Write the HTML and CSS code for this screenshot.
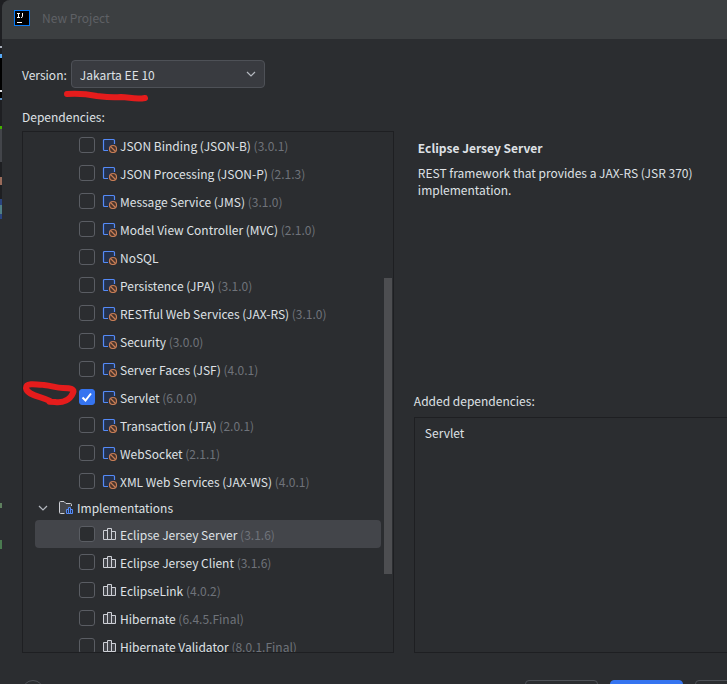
FILE: index.html
```
<!DOCTYPE html>
<html lang="en">
    <head>
        <meta charset="UTF-8">
        <title>New Project</title>
        <link rel="stylesheet" href="styles.css">
    </head>
    <body>
        <!-- Shared icons -->
        <svg class="symbols" aria-hidden="true">
            <symbol id="spec" viewBox="0 0 16 16">
                <path d="M7 13.5H2.5A1 1 0 0 1 1.5 12.5V3.5A1 1 0 0 1 2.5 2.5H11.5A1 1 0 0 1 12.5 3.5V7.5L7 10z" fill="#25324d"/>
                <path d="M6 13.5H2.5A1 1 0 0 1 1.5 12.5V3.5A1 1 0 0 1 2.5 2.5H11.5A1 1 0 0 1 12.5 3.5V7" fill="none" stroke="#548af7" stroke-width="1.2"/>
                <circle cx="11" cy="12" r="3.5" fill="#45322b" stroke="#c77d55" stroke-width="1.2"/>
                <path d="M8.5 9.5L13.5 14.5" stroke="#c77d55" stroke-width="1.2"/>
            </symbol>
            <symbol id="library" viewBox="0 0 16 16">
                <path d="M1.5 4.5H5.5V13.5H1.5zM5.5 2.5H9.5V13.5H5.5zM9.5 5.5H13.5V13.5H9.5z" fill="#43454a" stroke="#ced0d6"/>
            </symbol>
            <symbol id="folder" viewBox="0 0 16 16">
                <path d="M6.5 13.5H2.5A1 1 0 0 1 1.5 12.5V2.5A1 1 0 0 1 2.5 1.5H6L8 3.5H12.5A1 1 0 0 1 13.5 4.5V6" fill="#43454a" stroke="#ced0d6"/>
                <path d="M8.5 9.5H10.5V13.5H8.5zM10.5 7.5H12.5V13.5H10.5zM12.5 9.5H14.5V13.5H12.5z" fill="#25324d" stroke="#548af7"/>
            </symbol>
            <symbol id="chevron" viewBox="0 0 16 16">
                <path d="M4 6L8 10L12 6" fill="none" stroke="#b4b8bf" stroke-width="1.2"/>
            </symbol>
        </svg>

        <div class="editor"></div>
        <main class="dialog">
            <header class="titlebar">
                <svg class="logo" viewBox="0 0 16 16" aria-hidden="true">
                    <rect x="0.5" y="0.5" width="15" height="15" fill="#000" stroke="#087cfa"/>
                    <path d="M3 3.5H6M4.5 3.5V7.5M3 7.5H6M8.5 3V6.5Q8.5 7.5 7 7.5M3 12.5H8" fill="none" stroke="#fff"/>
                </svg>
                <h1>New Project</h1>
            </header>

            <div class="content">
                <div class="version">
                    <label for="version">Version:</label>
                    <div class="selectBox">
                        <select id="version">
                            <option>Jakarta EE 10</option>
                        </select>
                        <svg class="icon arrow" aria-hidden="true"><use href="#chevron"/></svg>
                    </div>
                </div>
                <h2 class="depsLabel">Dependencies:</h2>

                <div class="columns">
                    <div class="tree">
                        <ul class="nodes">
                            <li><label class="row"><input type="checkbox"><svg class="icon"><use href="#spec"/></svg><span>JSON Binding (JSON-B) <small>(3.0.1)</small></span></label></li>
                            <li><label class="row"><input type="checkbox"><svg class="icon"><use href="#spec"/></svg><span>JSON Processing (JSON-P) <small>(2.1.3)</small></span></label></li>
                            <li><label class="row"><input type="checkbox"><svg class="icon"><use href="#spec"/></svg><span>Message Service (JMS) <small>(3.1.0)</small></span></label></li>
                            <li><label class="row"><input type="checkbox"><svg class="icon"><use href="#spec"/></svg><span>Model View Controller (MVC) <small>(2.1.0)</small></span></label></li>
                            <li><label class="row"><input type="checkbox"><svg class="icon"><use href="#spec"/></svg><span>NoSQL</span></label></li>
                            <li><label class="row"><input type="checkbox"><svg class="icon"><use href="#spec"/></svg><span>Persistence (JPA) <small>(3.1.0)</small></span></label></li>
                            <li><label class="row"><input type="checkbox"><svg class="icon"><use href="#spec"/></svg><span>RESTful Web Services (JAX-RS) <small>(3.1.0)</small></span></label></li>
                            <li><label class="row"><input type="checkbox"><svg class="icon"><use href="#spec"/></svg><span>Security <small>(3.0.0)</small></span></label></li>
                            <li><label class="row"><input type="checkbox"><svg class="icon"><use href="#spec"/></svg><span>Server Faces (JSF) <small>(4.0.1)</small></span></label></li>
                            <li><label class="row"><input type="checkbox" checked><svg class="icon"><use href="#spec"/></svg><span>Servlet <small>(6.0.0)</small></span></label></li>
                            <li><label class="row"><input type="checkbox"><svg class="icon"><use href="#spec"/></svg><span>Transaction (JTA) <small>(2.0.1)</small></span></label></li>
                            <li><label class="row"><input type="checkbox"><svg class="icon"><use href="#spec"/></svg><span>WebSocket <small>(2.1.1)</small></span></label></li>
                            <li><label class="row"><input type="checkbox"><svg class="icon"><use href="#spec"/></svg><span>XML Web Services (JAX-WS) <small>(4.0.1)</small></span></label></li>
                            <li>
                                <button class="group" type="button" aria-expanded="true"><svg class="icon"><use href="#chevron"/></svg><svg class="icon"><use href="#folder"/></svg><span>Implementations</span></button>
                                <ul>
                                    <li><label class="row selected"><input type="checkbox"><svg class="icon"><use href="#library"/></svg><span>Eclipse Jersey Server <small>(3.1.6)</small></span></label></li>
                                    <li><label class="row"><input type="checkbox"><svg class="icon"><use href="#library"/></svg><span>Eclipse Jersey Client <small>(3.1.6)</small></span></label></li>
                                    <li><label class="row"><input type="checkbox"><svg class="icon"><use href="#library"/></svg><span>EclipseLink <small>(4.0.2)</small></span></label></li>
                                    <li><label class="row"><input type="checkbox"><svg class="icon"><use href="#library"/></svg><span>Hibernate <small>(6.4.5.Final)</small></span></label></li>
                                    <li><label class="row"><input type="checkbox"><svg class="icon"><use href="#library"/></svg><span>Hibernate Validator <small>(8.0.1.Final)</small></span></label></li>
                                </ul>
                            </li>
                        </ul>
                        <div class="thumb"></div>
                    </div>

                    <div class="side">
                        <section class="details">
                            <h2>Eclipse Jersey Server</h2>
                            <p>REST framework that provides a JAX-RS (JSR 370) implementation.</p>
                        </section>
                        <h2 class="addedLabel">Added dependencies:</h2>
                        <ul class="added">
                            <li>Servlet</li>
                        </ul>
                    </div>
                </div>
            </div>

            <footer class="actions">
                <button class="help" type="button" aria-label="Help"></button>
                <button class="action" type="button" aria-label="Previous"></button>
                <button class="action primary" type="button" aria-label="Create"></button>
                <button class="action" type="button" aria-label="Cancel"></button>
            </footer>
        </main>

        <!-- Red pen marks -->
        <svg class="pen penVersion" viewBox="0 0 86 14" aria-hidden="true">
            <path d="M4 5C18 4 24 5 34 7C42 8 48 9 58 8C66 8 72 11 82 9" />
        </svg>
        <svg class="pen penServlet" viewBox="0 0 56 28" aria-hidden="true">
            <path d="M28 22C17 17 5 16 4 9C4 4 12 5 22 6C31 7 34 9 41 9C49 9 53 10 51 14C48 21 41 24 33 23C28 23 27 23 27 22" />
        </svg>
    </body>
</html>
```
FILE: styles.css
```
* {
    box-sizing: border-box;
}

html, body {
    height: 100%;
    overflow: hidden;
}

body {
    margin: 0;
    display: flex;
    background: #1e1f22;
    font-family: "Noto Sans CJK KR", "Noto Sans", sans-serif;
    font-size: 12px;
    line-height: 17px;
    color: #dfe1e5;
}

h1, h2, p, ul {
    margin: 0;
    padding: 0;
    font-size: 12px;
    font-weight: normal;
}

ul {
    list-style: none;
}

button, select {
    font-family: inherit;
    font-size: 12px;
    color: inherit;
}

.symbols {
    position: absolute;
    width: 0;
    height: 0;
}

.icon {
    width: 16px;
    height: 16px;
    flex: none;
}

/* edge of the editor behind the dialog */
.editor {
    flex: 0 0 2px;
    background: linear-gradient(#1e1f22 46px, #a8adb8 46px 48px, #1e1f22 48px 54px, #56a8f5 54px 58px, #000000 58px 90px, #dfe1e5 90px 92px, #000000 92px 98px, #5c8fc0 98px 100px, #1e1f22 100px 126px, #43b000 126px 129px, #43454a 129px 162px, #1e1f22 162px 177px, #9a6b5a 177px 185px, #1e1f22 185px 199px, #2a4480 199px 205px, #4f7f86 205px 214px, #2a4480 214px 219px, #2b2d30 219px 503px, #5f7f5f 503px 508px, #2b2d30 508px 540px, #4a7a50 540px 549px, #2b2d30 549px);
}

/* runs past the right and bottom edges of the window */
.dialog {
    flex: 0 0 calc(100% + 59px);
    height: calc(100% + 44px);
    display: flex;
    flex-direction: column;
    background: #2b2d30;
    border-top-left-radius: 8px;
    overflow: hidden;
}

.titlebar {
    display: flex;
    align-items: center;
    gap: 12px;
    height: 39px;
    padding: 0 12px 4px;
    background: #3c3f41;
    flex: none;
}

.titlebar h1 {
    color: #5f6165;
}

.logo {
    width: 16px;
    height: 16px;
}

.content {
    flex: 1;
    min-height: 0;
    display: flex;
    flex-direction: column;
    padding: 21px 20px 0;
}

.version {
    display: flex;
    align-items: center;
    gap: 4px;
}

.selectBox {
    display: grid;
    align-items: center;
    width: 194px;
}

.selectBox > * {
    grid-area: 1 / 1;
}

#version {
    appearance: none;
    height: 28px;
    padding: 0 8px;
    background: #393b40;
    border: 1px solid #4e5157;
    border-radius: 4px;
}

.arrow {
    justify-self: end;
    margin-right: 6px;
    pointer-events: none;
}

.depsLabel {
    padding: 20px 0 6px;
}

.columns {
    flex: 1;
    min-height: 0;
    display: grid;
    grid-template-columns: 21fr 20fr;
    grid-template-rows: minmax(0, 1fr);
    gap: 20px;
}

.tree {
    position: relative;
    padding: 0 12px;
    border: 1px solid #1e1f22;
    overflow: hidden;
}

/* the list is scrolled part of the way down */
.nodes {
    margin-top: -1px;
}

.row {
    display: flex;
    align-items: center;
    height: 28px;
    padding-left: 44px;
    border-radius: 4px;
}

.row span {
    padding-left: 2px;
}

.row small {
    font-size: 12px;
    color: #6f737a;
}

.row .icon {
    margin-left: 7px;
}

.selected {
    background: #43454a;
}

.row input {
    appearance: none;
    width: 16px;
    height: 16px;
    margin: 0;
    background: #2b2d30;
    border: 1px solid #5a5d63;
    border-radius: 3px;
}

.row input:checked {
    background: #3574f0 url("data:image/svg+xml,%3Csvg xmlns='http://www.w3.org/2000/svg' viewBox='0 0 16 16'%3E%3Cpath d='M3.5 8.5L6.5 11.5L12 4.5' fill='none' stroke='white' stroke-width='2'/%3E%3C/svg%3E") center / 16px 16px;
    border-color: #3574f0;
}

.group {
    display: flex;
    align-items: center;
    width: 100%;
    height: 25px;
    padding: 0;
    background: none;
    border: 0;
    text-align: left;
}

.group .icon + .icon {
    margin-left: 7px;
}

.group span {
    padding-left: 3px;
}

.thumb {
    position: absolute;
    top: 28%;
    right: 1px;
    width: 8px;
    height: 57%;
    background: #4d4e51;
}

.side {
    display: flex;
    flex-direction: column;
}

.details {
    flex: 19 1 0;
    padding: 8px 4px 0;
}

.details h2 {
    font-weight: bold;
    padding-bottom: 8px;
}

.addedLabel {
    padding: 4px 0 8px;
}

.added {
    flex: 17 1 0;
    padding: 6px 10px;
    border: 1px solid #1e1f22;
}

.actions {
    display: flex;
    gap: 12px;
    padding: 27px 20px 20px;
    flex: none;
}

.action, .help {
    height: 28px;
    padding: 0;
    background: none;
    border: 1px solid #4e5157;
    border-radius: 4px;
}

.action {
    width: 73px;
}

.help {
    width: 22px;
    height: 22px;
    border-radius: 50%;
    margin-right: auto;
}

.primary {
    background: #3574f0;
    border-color: #3574f0;
}

.pen {
    position: absolute;
    fill: none;
    stroke: #e51c1c;
    stroke-width: 6;
    stroke-linecap: round;
    stroke-linejoin: round;
    pointer-events: none;
}

.penVersion {
    left: 63px;
    top: 89px;
    width: 86px;
    height: 14px;
}

.penServlet {
    left: 22px;
    top: 379px;
    width: 56px;
    height: 28px;
}
```
